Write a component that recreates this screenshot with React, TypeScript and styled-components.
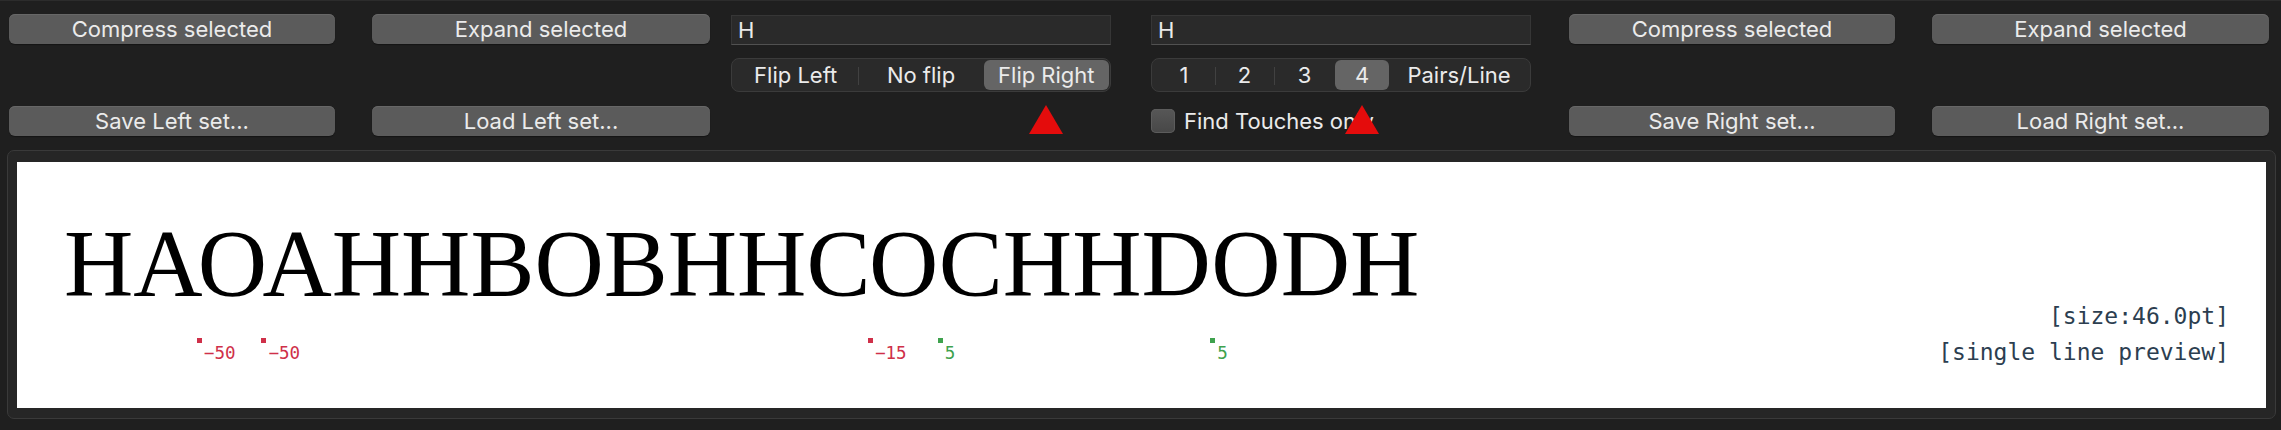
import styled, { createGlobalStyle } from "styled-components";

/* ================== GLOBAL ================== */

const GlobalStyle = createGlobalStyle`
  html, body {
    margin: 0;
    padding: 0;
    background: #1f1f1f;
  }
  * {
    box-sizing: border-box;
  }
`;

const UI_FONT = `Inter, "Noto Sans", "Liberation Sans", sans-serif`;
const MONO = `"DejaVu Sans Mono", "Liberation Mono", monospace`;

/* ================== STYLES ================== */

const Window = styled.div`
  width: 2281px;
  height: 430px;
  background: #1f1f1f;
  border-top: 1px solid #2c2c2c;
  font-family: ${UI_FONT};
  overflow: hidden;
`;

/* ===== TOOLBAR ===== */

const Toolbar = styled.div`
  display: flex;
  padding: 13px 12px 0 9px;
`;

const Group = styled.div<{ $cols: string; $gap: number; $offset?: number }>`
  display: grid;
  grid-template-columns: ${(p) => p.$cols};
  grid-template-rows: 30px 34px 30px;
  column-gap: ${(p) => p.$gap}px;
  row-gap: 14px;
  margin-left: ${(p) => p.$offset ?? 0}px;
`;

const Button = styled.button<{ $row: number }>`
  grid-row: ${(p) => p.$row};
  height: 30px;
  border: none;
  border-radius: 6px;
  background: #5b5b5b;
  box-shadow: inset 0 1px 0 #676767, 0 1px 1px rgba(0, 0, 0, 0.35);
  color: #ebebeb;
  font-family: ${UI_FONT};
  font-size: 22px;
  padding: 0;
  cursor: pointer;
`;

const TextField = styled.input`
  grid-row: 1;
  height: 30px;
  margin-top: 1px;
  background: #2a2a2a;
  border: 1px solid #363636;
  border-bottom-color: #515151;
  color: #ebebeb;
  font-family: ${UI_FONT};
  font-size: 22px;
  padding: 0 6px;
  outline: none;
`;

/* ===== SEGMENTED ===== */

const Segmented = styled.div`
  grid-row: 2;
  display: flex;
  height: 34px;
  padding: 1px;
  border: 1px solid #3b3b3b;
  border-radius: 8px;
  background: #2a2a2a;
`;

const Segment = styled.button<{ $active: boolean; $divider: boolean; $w?: number }>`
  position: relative;
  flex: ${(p) => (p.$w ? `0 0 ${p.$w}px` : "1 1 0")};
  height: 100%;
  border: none;
  border-radius: 6px;
  background: ${(p) => (p.$active ? "#656565" : "transparent")};
  color: #ebebeb;
  font-family: ${UI_FONT};
  font-size: 22px;
  padding: 0;
  cursor: pointer;

  &::before {
    content: "";
    display: ${(p) => (p.$divider ? "block" : "none")};
    position: absolute;
    left: 0;
    top: 7px;
    width: 1px;
    height: 18px;
    background: #414141;
  }
`;

const Pointer = styled.span`
  position: absolute;
  left: 50%;
  top: calc(100% + 15px);
  transform: translateX(-50%);
  width: 0;
  height: 0;
  border-left: 17px solid transparent;
  border-right: 17px solid transparent;
  border-bottom: 29px solid #e40c0c;
  z-index: 5;
`;

/* ===== CHECKBOX ===== */

const CheckRow = styled.label`
  grid-row: 3;
  grid-column: 2;
  display: flex;
  align-items: center;
  gap: 9px;
  color: #ebebeb;
  font-size: 22px;
`;

const CheckBox = styled.span`
  width: 24px;
  height: 24px;
  border-radius: 5px;
  background: linear-gradient(#575757, #474747);
  box-shadow: inset 0 0 0 1px #5c5c5c;
`;

/* ===== PREVIEW ===== */

const Panel = styled.section`
  margin: 14px 5px 0 7px;
  padding: 11px 9px 10px;
  border: 1px solid #3a3a3a;
  border-radius: 7px;
  background: #262626;
`;

const Canvas = styled.div`
  height: 246px;
  background: #fff;
  display: flex;
  justify-content: space-between;
  align-items: flex-start;
  padding: 54px 37px 0 47px;
`;

const Line = styled.div`
  display: flex;
  align-items: flex-start;
  height: 96px;
  font-family: "Liberation Serif", "Times New Roman", serif;
  font-size: 96px;
  line-height: 96px;
  color: #000;
`;

const Glyph = styled.span<{ $kern: number }>`
  position: relative;
  display: block;
  margin-left: ${(p) => (p.$kern * 96) / 1000}px;
`;

const Marker = styled.span<{ $color: string }>`
  position: absolute;
  left: -1px;
  top: 122px;
  display: flex;
  align-items: flex-start;
  color: ${(p) => p.$color};
`;

const Dot = styled.span`
  width: 5px;
  height: 5px;
  background: currentColor;
`;

const KernValue = styled.span`
  margin: 7px 0 0 2px;
  font-family: ${MONO};
  font-size: 17.5px;
  line-height: 17px;
`;

const Info = styled.div`
  margin-top: 82px;
  font-family: ${MONO};
  font-size: 23px;
  line-height: 36px;
  color: #2c3e50;
  text-align: right;
  white-space: pre;
`;

/* ================== DATA ================== */

const PREVIEW = "HAOAHHBOBHHCOCHHDODH";

// kerning (units/1000) applied before the glyph at the given index
const KERNS: Record<number, number> = { 2: -50, 3: -50, 12: -15, 13: 5, 17: 5 };

const FLIPS = ["Flip Left", "No flip", "Flip Right"];
const PAIRS = [
  { label: "1", w: 62 },
  { label: "2", w: 59 },
  { label: "3", w: 61 },
  { label: "4", w: 54 },
  { label: "Pairs/Line" },
];

type Item = { label: string; w?: number };

function SegmentedControl({ items, active }: { items: Item[]; active: number }) {
  return (
    <Segmented>
      {items.map((it, i) => (
        <Segment
          key={it.label}
          $w={it.w}
          $active={i === active}
          $divider={i > 0 && i !== active && i - 1 !== active}
        >
          {it.label}
          {i === active && <Pointer />}
        </Segment>
      ))}
    </Segmented>
  );
}

/* ================== PAGE ================== */

export default function App() {
  return (
    <Window>
      <GlobalStyle />
      <Toolbar>
        <Group $cols="326px 338px" $gap={37}>
          <Button $row={1}>Compress selected</Button>
          <Button $row={1}>Expand selected</Button>
          <Button $row={3}>Save Left set...</Button>
          <Button $row={3}>Load Left set...</Button>
        </Group>

        <Group $cols="380px 380px" $gap={40} $offset={21}>
          <TextField value="H" readOnly />
          <TextField value="H" readOnly />
          <SegmentedControl items={FLIPS.map((label) => ({ label }))} active={2} />
          <SegmentedControl items={PAIRS} active={3} />
          <CheckRow>
            <CheckBox />
            Find Touches only
          </CheckRow>
        </Group>

        <Group $cols="326px 337px" $gap={37} $offset={38}>
          <Button $row={1}>Compress selected</Button>
          <Button $row={1}>Expand selected</Button>
          <Button $row={3}>Save Right set...</Button>
          <Button $row={3}>Load Right set...</Button>
        </Group>
      </Toolbar>

      <Panel>
        <Canvas>
          <Line>
            {PREVIEW.split("").map((ch, i) => {
              const kern = KERNS[i] ?? 0;
              return (
                <Glyph key={i} $kern={kern}>
                  {ch}
                  {kern !== 0 && (
                    <Marker $color={kern < 0 ? "#cf3049" : "#3fa24e"}>
                      <Dot />
                      <KernValue>{kern < 0 ? `\u2212${-kern}` : kern}</KernValue>
                    </Marker>
                  )}
                </Glyph>
              );
            })}
          </Line>
          <Info>{"[size:46.0pt]\n[single line preview]"}</Info>
        </Canvas>
      </Panel>
    </Window>
  );
}
